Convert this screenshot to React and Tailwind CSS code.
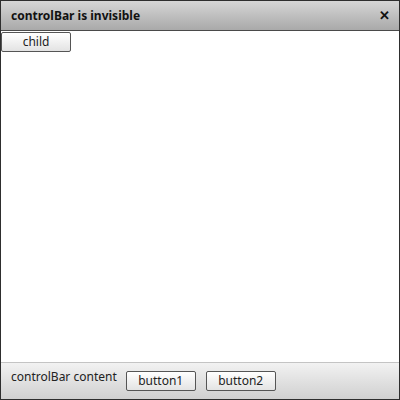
export default function App() {
  return (
    <div
      className="w-[400px] h-[400px] flex flex-col border border-[#2e2e2e] bg-white text-[#222]"
      style={{ fontFamily: '"Noto Sans", "Open Sans", sans-serif' }}
    >
      <div className="h-[30px] shrink-0 flex items-center justify-between pl-[10px] pr-[9px] bg-gradient-to-b from-[#d6d6d6] to-[#a9a9a9] border-b border-[#4a4a4a]">
        <span className="text-[12px] font-bold text-[#111]">controlBar is invisible</span>
        <span className="text-[13px] font-bold text-[#111] leading-none">✕</span>
      </div>
      <div className="flex-1 flex flex-col items-start pt-[1px]">
        <button className="w-[70px] h-[20px] text-[12px] leading-none border border-[#555] rounded-[2px] bg-gradient-to-b from-[#ffffff] to-[#e3e3e3] text-[#222]">
          child
        </button>
      </div>
      <div className="h-[37px] shrink-0 flex items-start gap-[10px] pl-[10px] pt-[7px] border-t border-[#c4c4c4] bg-gradient-to-b from-[#f2f2f2] to-[#d0d0d0]">
        <span className="text-[12px] leading-none pt-[1px] mr-[-1px]">controlBar content</span>
        <button className="w-[70px] h-[20px] mt-[1px] text-[12px] leading-none border border-[#555] rounded-[2px] bg-gradient-to-b from-[#ffffff] to-[#e3e3e3] text-[#222]">
          button1
        </button>
        <button className="w-[70px] h-[20px] mt-[1px] text-[12px] leading-none border border-[#555] rounded-[2px] bg-gradient-to-b from-[#ffffff] to-[#e3e3e3] text-[#222]">
          button2
        </button>
      </div>
    </div>
  );
}
